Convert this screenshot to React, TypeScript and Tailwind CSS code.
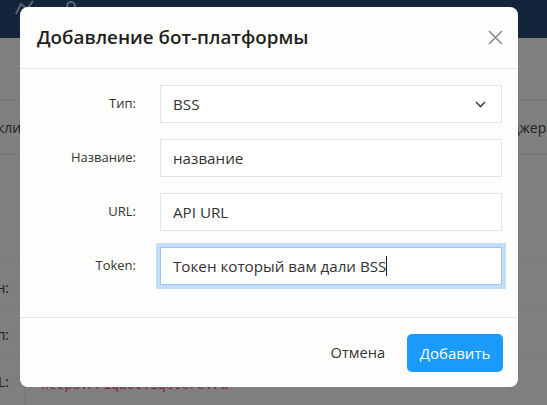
import { ReactNode } from "react";

function CloseIcon() {
  return (
    <svg width="15" height="15" viewBox="0 0 15 15" fill="none" stroke="#8a8a8a" strokeWidth="1.6">
      <path d="M1 1L14 14M14 1L1 14" />
    </svg>
  );
}

function Chevron() {
  return (
    <svg width="11" height="7" viewBox="0 0 11 7" fill="none" stroke="#444" strokeWidth="1.6">
      <path d="M1 1L5.5 5.5L10 1" />
    </svg>
  );
}

function Field({ label, children }: { label: string; children: ReactNode }) {
  return (
    <div className="flex items-center">
      <div className="w-[140px] shrink-0 pr-[24px] text-right text-[13px] text-[#333]">{label}</div>
      {children}
    </div>
  );
}

function TextBox({ value }: { value: string }) {
  return (
    <div className="flex h-[38px] flex-1 items-center border border-[#e3e3e3] bg-white px-[12px] text-[15.2px] text-[#333]">
      {value}
    </div>
  );
}

// clipped label of the table behind the overlay
function EdgeLabel({ children }: { children: ReactNode }) {
  return (
    <div className="flex w-[9px] shrink-0 justify-end overflow-hidden">
      <span className="shrink-0 whitespace-nowrap">{children}</span>
    </div>
  );
}

function Backdrop() {
  return (
    <div className="flex h-full flex-col text-[14px] text-[#222]">
      <div className="flex h-[38px] items-end gap-[28px] bg-[#13253a] pl-[14px]">
        <svg width="20" height="16" viewBox="0 0 20 16" fill="none" stroke="#56657a" strokeWidth="2" className="mb-[22px]">
          <path d="M2 14L7 4L13 9L19 1" />
        </svg>
        <svg width="18" height="16" viewBox="0 0 18 16" fill="none" stroke="#56657a" strokeWidth="2" className="mb-[22px]">
          <circle cx="9" cy="6" r="4" />
        </svg>
      </div>
      <div className="h-[63px] border-b border-[#747474]" />
      <div className="flex h-[54px] items-center justify-between overflow-hidden border-b border-[#747474]">
        <span className="-ml-[3px] whitespace-nowrap">кли</span>
        <span className="-mr-[10px] whitespace-nowrap">Менеджеры</span>
      </div>
      <div className="h-[70px]" />
      <div className="h-[40px] border-b border-[#7a7a7a]" />
      <div className="flex h-[47px] items-center border-b border-[#7a7a7a]">
        <EdgeLabel>Логин:</EdgeLabel>
      </div>
      <div className="flex h-[47px] items-center border-b border-[#7a7a7a]">
        <EdgeLabel>Тип:</EdgeLabel>
      </div>
      <div className="flex h-[47px] items-center">
        <EdgeLabel>URL:</EdgeLabel>
        <div className="ml-[15px] self-stretch border-l border-[#7a7a7a] pl-[16px] pt-[18px] font-['Liberation_Mono',monospace] text-[13px] text-[#8a2137]">
          https://iqbot.iqstore.ru
        </div>
      </div>
    </div>
  );
}

export default function App() {
  return (
    <div className="relative h-[405px] w-[547px] overflow-hidden bg-[#7f7f7f] font-['Open_Sans',sans-serif]">
      <Backdrop />

      <div className="absolute left-[20px] top-[7px] w-[498px] rounded-[8px] bg-[#fdfdfb]">
        <div className="flex h-[62px] items-center justify-between border-b border-[#e4e4e4] pl-[17px] pr-[15px]">
          <h2 className="text-[18.8px] font-semibold text-[#1f1f1f]">Добавление бот-платформы</h2>
          <CloseIcon />
        </div>

        <div className="flex flex-col gap-[16px] pb-[32px] pr-[16px] pt-[16px]">
          <Field label="Тип:">
            <div className="flex h-[38px] flex-1 items-center justify-between border border-[#e3e3e3] bg-white pl-[12px] pr-[15px] text-[15.2px] text-[#333]">
              <span>BSS</span>
              <Chevron />
            </div>
          </Field>
          <Field label="Название:">
            <TextBox value="название" />
          </Field>
          <Field label="URL:">
            <TextBox value="API URL" />
          </Field>
          <Field label="Token:">
            <div className="flex h-[38px] flex-1 items-center border border-[#9fc4ee] bg-white px-[12px] text-[15.2px] text-[#333] ring-4 ring-[#c3dcf8]">
              <span>Токен который вам дали BSS</span>
              <span className="h-[20px] w-px bg-[#222]" />
            </div>
          </Field>
        </div>

        <div className="flex items-center justify-end gap-[6px] border-t border-[#e4e4e4] pb-[15px] pl-[16px] pr-[15px] pt-[16px]">
          <button className="h-[38px] px-[16px] text-[14.6px] text-[#333]">Отмена</button>
          <button className="h-[38px] w-[96px] rounded-[5px] bg-[#1a9bfc] text-[15px] text-white">Добавить</button>
        </div>
      </div>
    </div>
  );
}
